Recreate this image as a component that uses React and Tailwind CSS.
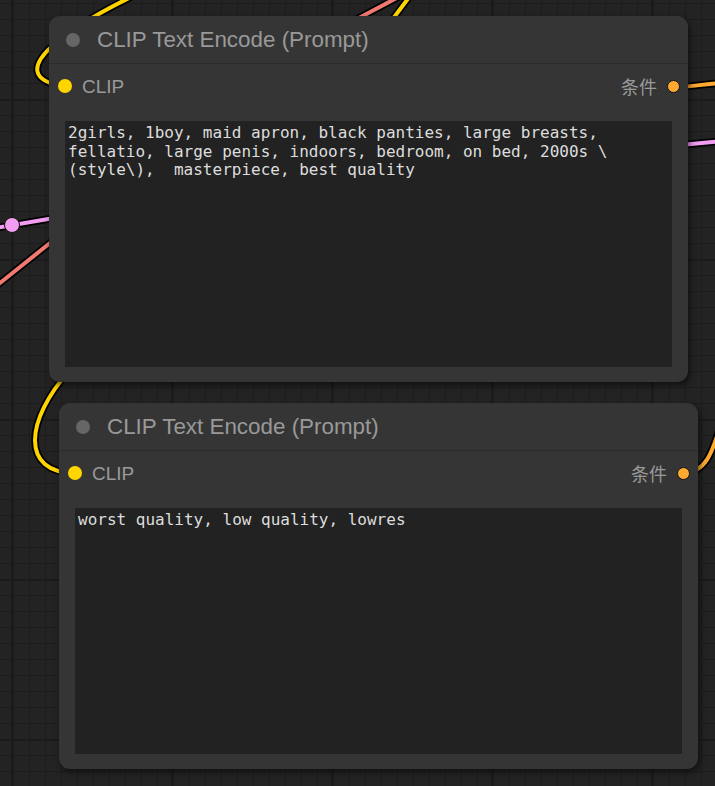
import React from 'react';

const POSITIVE =
  '2girls, 1boy, maid apron, black panties, large breasts, fellatio, large penis, indoors, bedroom, on bed, 2000s \\(style\\),  masterpiece, best quality';
const NEGATIVE = 'worst quality, low quality, lowres';

const wires = [
  { d: 'M 150 -12 C 70 25, -5 75, 65 87', color: '#ffd500' },
  { d: 'M 408 -8 L 340 28', color: '#f07a72' },
  { d: 'M 413 -8 L 386 28', color: '#ffd500' },
  { d: 'M 674 87 C 695 87, 700 84, 722 83', color: '#ffa931' },
  { d: 'M 670 146 L 722 141', color: '#f29cf2' },
  { d: 'M -10 229 L 60 217', color: '#f29cf2' },
  { d: 'M -10 291 L 60 235', color: '#f07a72' },
  { d: 'M 75 473 C 20 473, 25 420, 70 370', color: '#ffd500' },
  { d: 'M 683 473 C 705 473, 712 455, 722 420', color: '#ffa931' },
];

function Canvas() {
  return (
    <svg className="absolute inset-0" width="715" height="786">
      <defs>
        <pattern id="minor" x="13" y="3" width="16" height="16" patternUnits="userSpaceOnUse">
          <path d="M 0.5 0 V 16 M 0 0.5 H 16" stroke="#1d1d1d" strokeWidth="1" fill="none" />
        </pattern>
        <pattern id="major" x="171" y="99" width="160" height="160" patternUnits="userSpaceOnUse">
          <path d="M 1 0 V 160 M 0 1 H 160" stroke="#1b1b1b" strokeWidth="2" fill="none" />
        </pattern>
      </defs>
      <rect width="715" height="786" fill="#232323" />
      <rect width="715" height="786" fill="url(#minor)" />
      <rect width="715" height="786" fill="url(#major)" />
      {wires.map((w, i) => (
        <g key={i} fill="none" strokeLinecap="round">
          <path d={w.d} stroke="#000" strokeWidth="7.5" />
          <path d={w.d} stroke={w.color} strokeWidth="4" />
        </g>
      ))}
      <circle cx="12" cy="225" r="7.5" fill="#f29cf2" stroke="#111" strokeWidth="1" />
    </svg>
  );
}

function Node({ className, text }) {
  return (
    <div
      className={`absolute w-[639px] h-[366px] rounded-[11px] bg-[#353535] shadow-[2px_3px_6px_rgba(0,0,0,0.55)] flex flex-col ${className}`}
    >
      {/* title */}
      <div className="h-[48px] flex items-center pl-[17px] border-b border-[#2b2b2b] shrink-0">
        <span className="w-[14px] h-[14px] rounded-full bg-[#666666]" />
        <span className="ml-[17px] mt-[2px] text-[22.4px] text-[#999999] font-['Liberation_Sans',Arial,sans-serif] leading-none">
          CLIP Text Encode (Prompt)
        </span>
      </div>

      {/* slots */}
      <div className="h-[44px] flex items-center justify-between pl-[9px] pr-[8px] shrink-0 font-['Liberation_Sans','Noto_Sans_CJK_SC',sans-serif] text-[19px] text-[#9a9a9a]">
        <div className="flex items-center gap-[10px]">
          <span className="w-[14px] h-[14px] rounded-full bg-[#ffd500]" />
          <span className="leading-none">CLIP</span>
        </div>
        <div className="flex items-center gap-[10px]">
          <span className="leading-none font-['Noto_Sans_CJK_SC',sans-serif] text-[18px]">条件</span>
          <span className="w-[13px] h-[13px] rounded-full bg-[#ffa931] border-[1.5px] border-[#111]" />
        </div>
      </div>

      {/* widget */}
      <div className="mx-[16px] mt-[13px] h-[246px] bg-[#222222] px-[3px] pt-[3px] whitespace-pre-wrap font-['DejaVu_Sans_Mono',monospace] text-[16px] leading-[18.5px] text-[#dddddd] overflow-hidden">
        {text}
      </div>
    </div>
  );
}

export default function App() {
  return (
    <div className="relative w-[715px] h-[786px] overflow-hidden bg-[#232323]">
      <Canvas />
      <Node className="left-[49px] top-[16px]" text={POSITIVE} />
      <Node className="left-[59px] top-[403px]" text={NEGATIVE} />
    </div>
  );
}
